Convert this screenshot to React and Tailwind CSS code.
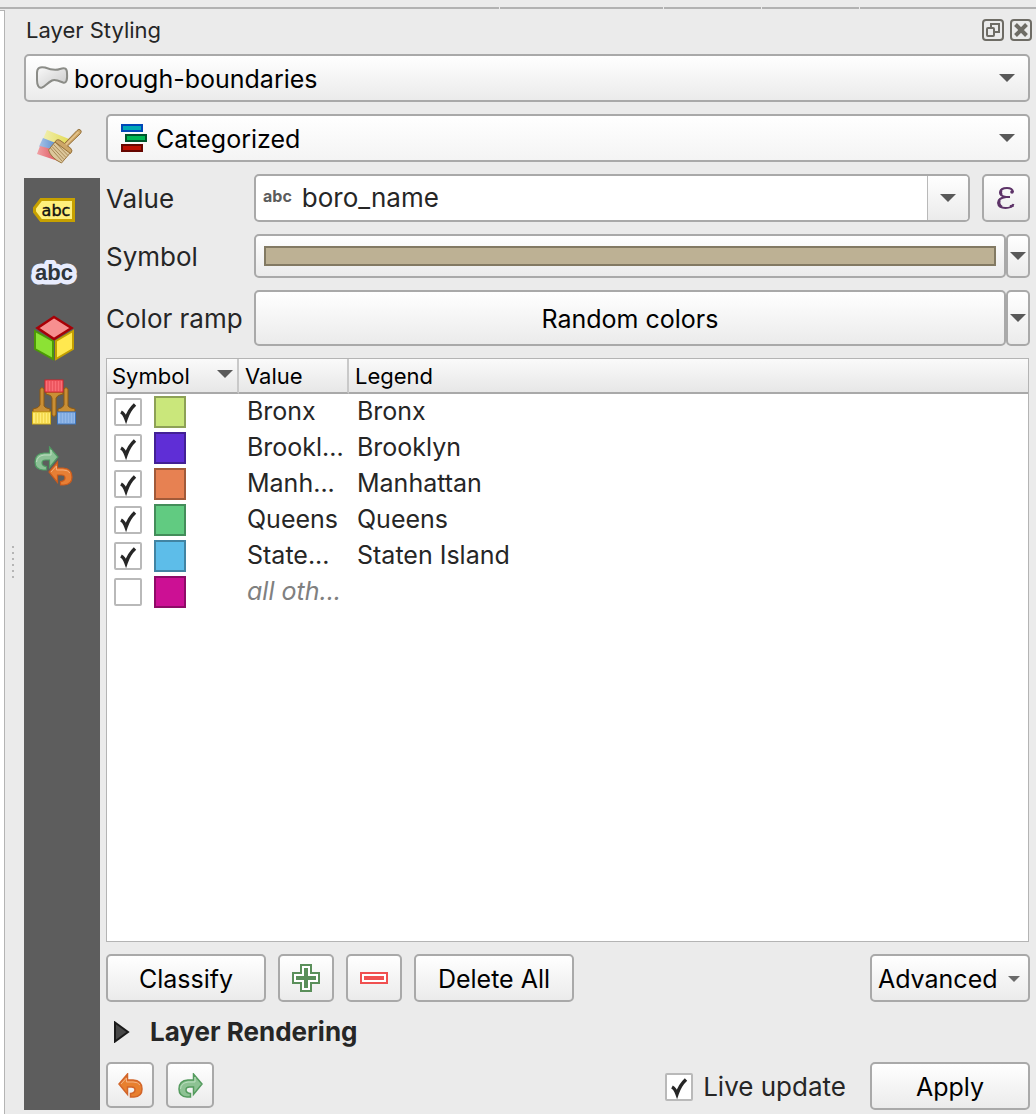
import React from "react";

const raised =
  "rounded-[5px] border-2 border-[#a9a9a9] bg-gradient-to-b from-white to-[#ebebeb] text-[25px] text-black";

function Arrow({ className = "" }) {
  return (
    <svg className={className} width="16" height="8" viewBox="0 0 16 8" aria-hidden="true">
      <path d="M0 0H16L8 8Z" fill="#595959" />
    </svg>
  );
}

function PolygonIcon() {
  return (
    <svg width="34" height="26" viewBox="0 0 34 26" aria-hidden="true">
      <defs>
        <linearGradient id="poly" x1="0" y1="0" x2="1" y2="1">
          <stop offset="0" stopColor="#fafafa" />
          <stop offset="1" stopColor="#c9c9c9" />
        </linearGradient>
      </defs>
      <path
        d="M2 8C2 2.500 5 1.500 10 2.500C15 4.500 21 5.500 25 4C30 2 32 3.500 32 8C32.500 15 31.500 18.500 28 17.500C23 15.500 20 14 17 15.500C12 18 10 21.500 7 22.500C3.500 23.500 2 20 2 15Z"
        fill="url(#poly)"
        stroke="#8b8c87"
        strokeWidth="2"
      />
    </svg>
  );
}

function CategorizedIcon() {
  return (
    <svg width="26" height="28" viewBox="0 0 26 28" aria-hidden="true">
      <rect x="1" y="1" width="20" height="6" fill="#00a8b5" stroke="#0047b8" strokeWidth="2" />
      <rect x="5" y="11" width="20" height="6" fill="#00b853" stroke="#00552b" strokeWidth="2" />
      <rect x="1" y="21" width="20" height="6" fill="#bd0d00" stroke="#660600" strokeWidth="2" />
    </svg>
  );
}

function BrushIcon() {
  return (
    <svg width="46" height="36" viewBox="0 0 46 36" aria-hidden="true">
      <defs>
        <linearGradient id="br-y" x1="0" x2="1"><stop offset="0" stopColor="#f1efb0" /><stop offset="1" stopColor="#e3db55" /></linearGradient>
        <linearGradient id="br-b" x1="0" x2="1"><stop offset="0" stopColor="#a6c4e8" /><stop offset="1" stopColor="#4b7fc6" /></linearGradient>
        <linearGradient id="br-r" x1="0" x2="1"><stop offset="0" stopColor="#f0a0a4" /><stop offset="1" stopColor="#dc4650" /></linearGradient>
      </defs>
      <path d="M10 2L32 11L26 20L6 11Z" fill="url(#br-y)" />
      <path d="M6 10L24 17L20 25L2 18.500Z" fill="url(#br-b)" />
      <path d="M3 18L18 22L24 34L0 26Z" fill="url(#br-r)" />
      <path d="M18 14L11.500 22Q14 30 24.500 35L34 24Z" fill="#dcc79c" stroke="#9b7740" strokeWidth="1" />
      <path d="M16.500 16.500L29 29.500M15 18.500L27 31.500M13.500 20L25 33M18.500 14.500L31 27.500" stroke="#a98a57" strokeWidth="1" />
      <path d="M18 14Q20 10 24 13L27.500 15.500L40 2.500Q42 .500 43.500 2Q45 3.500 43.500 5.500L30.500 18L33.500 20Q36.500 23 33.500 25.500Z" fill="#cda667" stroke="#94703a" strokeWidth="1" />
      <path d="M41.500 4L29 16.500" stroke="#e6c68f" strokeWidth="1.500" />
    </svg>
  );
}

function LabelsIcon() {
  return (
    <svg width="42" height="24" viewBox="0 0 42 24" aria-hidden="true">
      <path d="M8 1.500H40.500V22.500H8L1.500 14V10Z" fill="#fff07c" stroke="#c7a100" strokeWidth="3" />
      <text x="23" y="18" textAnchor="middle" fontFamily="DejaVu Sans, sans-serif" fontSize="16" fill="#111" stroke="#111" strokeWidth=".4">abc</text>
    </svg>
  );
}

function MaskIcon() {
  return (
    <svg width="48" height="28" viewBox="0 0 48 28" aria-hidden="true">
      <g fontFamily="Liberation Sans, sans-serif" fontSize="22" fontWeight="700">
        <text x="24" y="20" textAnchor="middle" fill="#e8ecfd" stroke="#e8ecfd" strokeWidth="9" strokeLinejoin="round">abc</text>
        <text x="24" y="20" textAnchor="middle" fill="#2f353b">abc</text>
      </g>
    </svg>
  );
}

function CubeIcon() {
  return (
    <svg width="40" height="46" viewBox="0 0 40 46" aria-hidden="true">
      <path d="M1 16L19 26V44L1 34Z" fill="#8ce234" stroke="#4c9a06" strokeWidth="2" />
      <path d="M39 16L22 26V44L39 34Z" fill="#ffe84f" stroke="#c4a000" strokeWidth="2" />
      <path d="M20 2L37.500 13L20 24L3.500 13Z" fill="#f78f8f" stroke="#a80006" strokeWidth="2.500" />
    </svg>
  );
}

function BrushesIcon() {
  return (
    <svg width="44" height="46" viewBox="0 0 44 46" aria-hidden="true">
      <g fill="#c98f35" stroke="#8f5b12" strokeWidth="1">
        <path d="M8 10Q10 7 12 10V27Q13 29 18 30V33H1V30Q7 29 8 26Z" />
        <path d="M32 10Q34 7 36 10V27Q37 29 43 30V33H26V30Q31 29 32 26Z" />
        <path d="M14 13H31V15Q25 16 24 19V36Q22 39 20 36V19Q20 16 14 15Z" />
      </g>
      <rect x="13" y="1" width="18" height="12" fill="#fa6e76" stroke="#d3222b" />
      <path d="M16 2V13M19 2V13M22 2V13M25 2V13M28 2V13" stroke="#e0424c" />
      <rect x=".5" y="33" width="18" height="12" fill="#ffec75" stroke="#d3ae16" />
      <path d="M4 34V44M7 34V44M10 34V44M13 34V44M16 34V44" stroke="#eccb30" />
      <rect x="25.500" y="33" width="18" height="12" fill="#94b9e9" stroke="#3c75bd" />
      <path d="M29 34V44M32 34V44M35 34V44M38 34V44M41 34V44" stroke="#719fd9" />
    </svg>
  );
}

const redoShape = "M15.500 1V7H10Q1 7.500 1 16Q1 23.500 9 24H12.500V20.500Q8 20 8 17Q8 14 11.500 14H15.500V21.500L24 11Z";
const undoShape = "M9.500 1V7H15Q24 7.500 24 16Q24 23.500 16 24H12.500V20.500Q17 20 17 17Q17 14 13.500 14H9.500V21.500L1 11Z";

function HistoryIcon() {
  return (
    <svg width="40" height="40" viewBox="0 0 40 40" aria-hidden="true">
      <path d={redoShape} fill="#8cc196" stroke="#4f9a62" strokeWidth="1.200" />
      <path d="M17 4V9H10Q3 10 2.500 16" fill="none" stroke="#bcdfc0" strokeWidth="1" />
      <g transform="translate(14 15)">
        <path d={undoShape} fill="#e77f35" stroke="#c95b1d" strokeWidth="1.200" />
        <path d="M3 11L8.500 5V9H15Q20 9 22 12" fill="none" stroke="#f5ac78" strokeWidth="1" />
      </g>
    </svg>
  );
}

function UndoIcon() {
  return (
    <svg width="25" height="25" viewBox="0 0 25 25" aria-hidden="true">
      <path d={undoShape} fill="#e8802f" stroke="#d2652a" strokeWidth="1.500" />
      <path d="M3 11L8.500 5V9H15Q20 9 22 12" fill="none" stroke="#f3b183" strokeWidth="1" />
    </svg>
  );
}

function RedoIcon() {
  return (
    <svg width="25" height="25" viewBox="0 0 25 25" aria-hidden="true">
      <path d={redoShape} fill="#8dc293" stroke="#549b5e" strokeWidth="1.500" />
      <path d="M17 4V9H10Q3 10 2.500 16" fill="none" stroke="#bcdfc0" strokeWidth="1" />
    </svg>
  );
}

function PlusIcon() {
  return (
    <svg width="28" height="28" viewBox="0 0 28 28" aria-hidden="true">
      <path d="M9 1H19V9H27V19H19V27H9V19H1V9H9Z" fill="#fff" stroke="#5a8f5a" strokeWidth="2" />
      <path d="M14 4V24M4 14H24" stroke="#5a8f5a" strokeWidth="4" />
    </svg>
  );
}

function MinusIcon() {
  return (
    <svg width="28" height="12" viewBox="0 0 28 12" aria-hidden="true">
      <rect x="1" y="1" width="26" height="10" fill="#fff" stroke="#f05050" strokeWidth="2" />
      <path d="M4 6H24" stroke="#f05050" strokeWidth="4" />
    </svg>
  );
}

function FloatIcon() {
  return (
    <svg width="22" height="22" viewBox="0 0 22 22" fill="none" stroke="#6e6c65" strokeWidth="2" aria-hidden="true">
      <rect x="1" y="1" width="20" height="20" rx="3" />
      <rect x="5" y="9" width="7" height="8" rx="1" />
      <path d="M9 8V5H17V13H13" />
    </svg>
  );
}

function CloseIcon() {
  return (
    <svg width="22" height="22" viewBox="0 0 22 22" fill="none" stroke="#6e6c65" aria-hidden="true">
      <rect x="1" y="1" width="20" height="20" rx="3" strokeWidth="2" />
      <path d="M5.500 5.500L16.500 16.500M16.500 5.500L5.500 16.500" strokeWidth="4" />
    </svg>
  );
}

function EpsilonIcon() {
  return (
    <svg width="20" height="24" viewBox="0 0 20 24" fill="none" stroke="#5d3368" aria-hidden="true">
      <path d="M17 6Q16.500 2 11 2Q4.500 2 4 6.500Q4 10 10 11Q2 12 2 17Q2.500 22 9.500 22Q16 22 17.500 18" strokeWidth="2" />
      <path d="M9 11H14" strokeWidth="2" />
      <circle cx="16" cy="6" r="1.800" fill="#5d3368" stroke="none" />
      <path d="M3.500 14Q2 18.500 6 21M5.500 4Q4 6 5.500 9" strokeWidth="2.500" />
      <path d="M14 20.500L17.500 19.500" strokeWidth="2.500" />
    </svg>
  );
}

function Check({ label, checked, text }) {
  return (
    <label className="flex items-center">
      <span className="relative block h-7 w-7">
        <input
          type="checkbox"
          defaultChecked={checked}
          aria-label={text ? undefined : label}
          className="peer block h-7 w-7 appearance-none rounded-xs border-2 border-[#b9b9b9] bg-white"
        />
        <svg className="pointer-events-none absolute inset-0 hidden peer-checked:block" width="28" height="28" viewBox="0 0 28 28" aria-hidden="true">
          <path d="M7 14Q10 15.500 12 21Q15 12 21 6.500" fill="none" stroke="#262626" strokeWidth="3.500" />
        </svg>
      </span>
      {text && <span className="pl-[10px]">{text}</span>}
    </label>
  );
}

function Combo({ icon, iconBox, label, value, fill = "to-[#ebebeb]" }) {
  return (
    <div className="relative">
      <select
        aria-label={label}
        className={`block h-12 w-full appearance-none rounded-[5px] border-2 border-[#a9a9a9] bg-gradient-to-b from-white pt-px pl-12 text-[25px] text-black ${fill}`}
      >
        <option>{value}</option>
      </select>
      <span className={`pointer-events-none absolute inset-y-0 flex items-center ${iconBox}`}>{icon}</span>
      <span className="pointer-events-none absolute inset-y-0 right-[15px] flex items-center">
        <Arrow />
      </span>
    </div>
  );
}

const classes = [
  { color: "bg-[#cae77b] border-[#8da156]", value: "Bronx", legend: "Bronx", on: true },
  { color: "bg-[#5f2ed6] border-[#422095]", value: "Brookl...", legend: "Brooklyn", on: true },
  { color: "bg-[#e78152] border-[#a15a39]", value: "Manh...", legend: "Manhattan", on: true },
  { color: "bg-[#61cb81] border-[#438d5a]", value: "Queens", legend: "Queens", on: true },
  { color: "bg-[#5dbde9] border-[#4184a3]", value: "State...", legend: "Staten Island", on: true },
  { color: "bg-[#cc1094] border-[#8e0b67]", value: "all oth...", legend: "", on: false },
];

const tabs = [
  { name: "Labels", icon: <LabelsIcon /> },
  { name: "Masks", icon: <MaskIcon /> },
  { name: "3D View", icon: <CubeIcon /> },
  { name: "Diagrams", icon: <BrushesIcon /> },
  { name: "History", icon: <HistoryIcon /> },
];

const dots = [0, 1, 2, 3, 4, 5];

export default function App() {
  return (
    <div className="flex min-h-screen flex-col bg-[#ebebeb] font-['Inter',sans-serif] text-[26px] leading-8 text-[#262626]">
      <div className="flex gap-px pt-[7px]">
        <div className="h-[2px] w-[499px] bg-[#b2b2b2]" />
        <div className="h-[2px] w-[163px] bg-[#b2b2b2]" />
        <div className="h-[2px] w-[97px] bg-[#b2b2b2]" />
        <div className="h-[2px] w-[97px] bg-[#b2b2b2]" />
        <div className="h-[2px] grow bg-[#b2b2b2]" />
      </div>
      <div className="flex grow">
        <div className="mt-px w-[5px] shrink-0 border-t border-r border-[#b4b4b4] bg-white" />
        <div className="flex w-[19px] shrink-0 flex-col items-center justify-center gap-1 pr-1">
          {dots.map((d) => (
            <span key={d} className="h-[2px] w-[2px] bg-[#b5b5b5]" />
          ))}
        </div>

        <main className="flex min-w-0 grow flex-col pr-1.5 pb-1">
          <header className="-mr-0.5 flex h-[45px] items-center justify-between pb-1">
            <h1 className="pl-[2px] text-[22px]">Layer Styling</h1>
            <div className="flex gap-1.5">
              <button aria-label="Float panel"><FloatIcon /></button>
              <button aria-label="Close panel"><CloseIcon /></button>
            </div>
          </header>

          <Combo label="Layer" value="borough-boundaries" icon={<PolygonIcon />} iconBox="left-[11px]" />

          <div className="flex grow">
            <nav className="flex w-[76px] shrink-0 flex-col">
              <button aria-label="Symbology" className="flex h-[76px] items-center justify-center pt-3 pr-1">
                <BrushIcon />
              </button>
              <div className="flex grow flex-col bg-[#5d5d5d] pr-4">
                {tabs.map((t) => (
                  <button key={t.name} aria-label={t.name} className="flex h-16 items-center justify-center">
                    {t.icon}
                  </button>
                ))}
              </div>
            </nav>

            <section className="flex min-w-0 grow flex-col gap-3 pt-3 pl-1.5">
              <Combo label="Renderer" value="Categorized" fill="to-[#f4f4f4]" icon={<CategorizedIcon />} iconBox="left-[15px]" />

              <div className="flex items-center">
                <label htmlFor="value" className="w-[148px] shrink-0 pt-px">Value</label>
                <div className="flex h-12 min-w-0 grow overflow-hidden rounded-[5px] border-2 border-[#a9a9a9] bg-white">
                  <span className="flex items-center pb-1 pl-[7px] text-base font-bold text-[#5c5c5c]">abc</span>
                  <input id="value" defaultValue="boro_name" className="min-w-0 grow bg-transparent pl-[10px]" />
                  <button aria-label="Show fields" className="flex w-[41px] items-center justify-center border-l border-[#b9b9b9] bg-gradient-to-b from-white to-[#ebebeb]">
                    <Arrow />
                  </button>
                </div>
                <button aria-label="Expression" className={`ml-3 flex h-12 w-12 items-center justify-center ${raised}`}>
                  <EpsilonIcon />
                </button>
              </div>

              <div className="flex items-center">
                <span className="w-[148px] shrink-0 pt-px">Symbol</span>
                <button aria-label="Change symbol" className={`flex h-11 grow items-center px-2 ${raised}`}>
                  <span className="h-5 w-full border-2 border-[#827962] bg-[#bdb194]" />
                </button>
                <button aria-label="Symbol options" className={`flex h-11 w-6 items-center justify-center ${raised}`}>
                  <Arrow className="shrink-0" />
                </button>
              </div>

              <div className="flex items-center">
                <span className="w-[148px] shrink-0 pt-px">Color ramp</span>
                <button className={`h-14 grow pt-px ${raised}`}>Random colors</button>
                <button aria-label="Color ramp options" className={`flex h-14 w-6 items-center justify-center ${raised}`}>
                  <Arrow className="shrink-0" />
                </button>
              </div>

              <div className="mr-px grow border border-[#b4b4b4] bg-white">
                <table className="w-full table-fixed border-separate border-spacing-0 text-left text-[25px]">
                  <colgroup>
                    <col className="w-[132px]" />
                    <col className="w-[110px]" />
                    <col />
                  </colgroup>
                  <thead>
                    <tr className="h-[34px] bg-gradient-to-b from-[#fafafa] to-[#e6e6e6] text-[22px] text-black">
                      <th className="border-r-2 border-b-2 border-r-[#c9c9c9] border-b-[#a9a9a9] p-0 pl-[5px] font-normal">
                        <span className="flex items-center justify-between pt-px pr-1">
                          Symbol
                          <Arrow className="mb-1" />
                        </span>
                      </th>
                      <th className="border-r-2 border-b-2 border-r-[#c9c9c9] border-b-[#a9a9a9] p-0 pt-px pl-[6px] font-normal">Value</th>
                      <th className="border-b-2 border-[#a9a9a9] p-0 pt-px pl-[6px] font-normal">Legend</th>
                    </tr>
                  </thead>
                  <tbody>
                    {classes.map((c) => (
                      <tr key={c.value} className="h-9">
                        <td className="p-0 pl-[7px]">
                          <div className="flex items-center gap-3">
                            <Check label={c.legend || "all other values"} checked={c.on} />
                            <span className={`h-8 w-8 border-2 ${c.color}`} />
                          </div>
                        </td>
                        <td className={c.on ? "p-0 pb-[3px] pl-2" : "p-0 pb-[3px] pl-2 text-[#808080] italic"}>{c.value}</td>
                        <td className="p-0 pb-[3px] pl-2">{c.legend}</td>
                      </tr>
                    ))}
                  </tbody>
                </table>
              </div>

              <div className="flex gap-3">
                <button className={`h-12 w-40 pt-px ${raised}`}>Classify</button>
                <button aria-label="Add category" className={`flex h-12 w-14 items-center justify-center ${raised}`}><PlusIcon /></button>
                <button aria-label="Remove category" className={`flex h-12 w-14 items-center justify-center ${raised}`}><MinusIcon /></button>
                <button className={`h-12 w-40 pt-px ${raised}`}>Delete All</button>
                <button className={`ml-auto flex h-12 w-40 items-center justify-between pt-px pr-2 pl-1.5 ${raised}`}>
                  Advanced
                  <svg width="12" height="6" viewBox="0 0 12 6" aria-hidden="true"><path d="M0 0H12L6 6Z" fill="#6a6a6a" /></svg>
                </button>
              </div>

              <button className="flex h-9 items-center gap-5 pl-2 font-bold">
                <svg width="16" height="22" viewBox="0 0 16 22" aria-hidden="true">
                  <path d="M1 1.500L14 11L1 20.500Z" fill="#474747" stroke="#1a1a1a" strokeWidth="2" />
                </svg>
                Layer Rendering
              </button>

              <div className="flex gap-3">
                <button aria-label="Undo" className={`flex h-[46px] w-12 items-center justify-center ${raised}`}><UndoIcon /></button>
                <button aria-label="Redo" className={`flex h-[46px] w-12 items-center justify-center ${raised}`}><RedoIcon /></button>
                <div className="ml-auto flex items-center pt-px pr-6"><Check checked text="Live update" /></div>
                <button className={`-ml-3 h-12 w-40 pt-px ${raised}`}>Apply</button>
              </div>
            </section>
          </div>
        </main>
      </div>
    </div>
  );
}
